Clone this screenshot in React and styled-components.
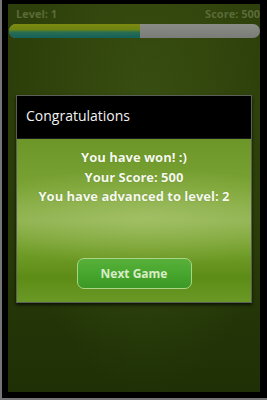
import React from 'react';
import styled, { createGlobalStyle } from 'styled-components';

const GlobalStyle = createGlobalStyle`
  html, body {
    margin: 0;
    padding: 0;
    background: #767676;
  }
  body {
    width: 267px;
    height: 400px;
    overflow: hidden;
    font-family: "Open Sans", "Noto Sans", sans-serif;
  }
`;

const Frame = styled.div`
  margin-left: 2px;
  width: 265px;
  height: 398px;
  box-sizing: border-box;
  background: #000;
  padding: 4px 7px 6px 6px;
`;

const Screen = styled.div`
  height: 100%;
  display: flex;
  flex-direction: column;
  background:
    radial-gradient(ellipse at 55% 30%, rgba(70, 95, 25, 0.5), rgba(0, 0, 0, 0) 70%),
    linear-gradient(#2d3f0a, #2a3d09 55%, #1f3006);
`;

const StatusRow = styled.div`
  display: flex;
  justify-content: space-between;
  padding: 2px 0 0 8px;
  height: 16px;
  font-size: 11px;
  font-weight: 700;
  color: #5b6b38;
  line-height: 16px;
`;

const Track = styled.div`
  margin: 2px 0 0 1px;
  height: 14px;
  border-radius: 7px;
  background: linear-gradient(#8a8c86, #7a7c77);
  overflow: hidden;
`;

const Fill = styled.div`
  height: 100%;
  background: linear-gradient(#7d8a10 0%, #6e8412 40%, #2a6e50 58%, #13605c 100%);
`;

const Overlay = styled.div`
  flex: 1;
  display: flex;
  justify-content: center;
  padding-top: 57px;
`;

const Dialog = styled.div`
  width: 236px;
  height: 208px;
  box-sizing: border-box;
  border: 1px solid #5c5e58;
  display: flex;
  flex-direction: column;
  box-shadow: 0 2px 3px rgba(0, 0, 0, 0.7);
`;

const TitleBar = styled.div`
  height: 42px;
  background: #000;
  color: #f2f2f2;
  font-size: 14px;
  line-height: 40px;
  padding-left: 9px;
  border-bottom: 1px solid #1a1a1a;
`;

const Body = styled.div`
  flex: 1;
  display: flex;
  flex-direction: column;
  align-items: center;
  background:
    radial-gradient(ellipse 80% 30% at 55% 48%, rgba(185, 210, 130, 0.45), rgba(0, 0, 0, 0) 100%),
    linear-gradient(#6c9628 0%, #7aa334 30%, #8db04c 50%, #729e2a 68%, #5d8c16 85%, #6a9826 100%);
`;

const Message = styled.div`
  margin-top: 9px;
  text-align: center;
  color: #f6faec;
  font-size: 13px;
  font-weight: 700;
  line-height: 19.5px;
  text-shadow: 0 0 1px rgba(60, 90, 20, 0.5);
`;

const Button = styled.button`
  margin-top: 51px;
  width: 115px;
  height: 31px;
  border-radius: 7px;
  border: 1px solid #aad486;
  background: linear-gradient(#58b03a, #46a52c 55%, #3c9826);
  color: #d8ecc8;
  font-family: "Open Sans", "Noto Sans", sans-serif;
  font-size: 12px;
  font-weight: 700;
  cursor: pointer;
`;

export default function App() {
  const level = 1;
  const score = 500;
  const progress = 52;

  return (
    <>
      <GlobalStyle />
      <Frame>
        <Screen>
          <StatusRow>
            <span>Level: {level}</span>
            <span>Score: {score}</span>
          </StatusRow>
          <Track>
            <Fill style={{ width: `${progress}%` }} />
          </Track>
          <Overlay>
            <Dialog>
              <TitleBar>Congratulations</TitleBar>
              <Body>
                <Message>
                  You have won! :)
                  <br />
                  Your Score: {score}
                  <br />
                  You have advanced to level: {level + 1}
                </Message>
                <Button>Next Game</Button>
              </Body>
            </Dialog>
          </Overlay>
        </Screen>
      </Frame>
    </>
  );
}
